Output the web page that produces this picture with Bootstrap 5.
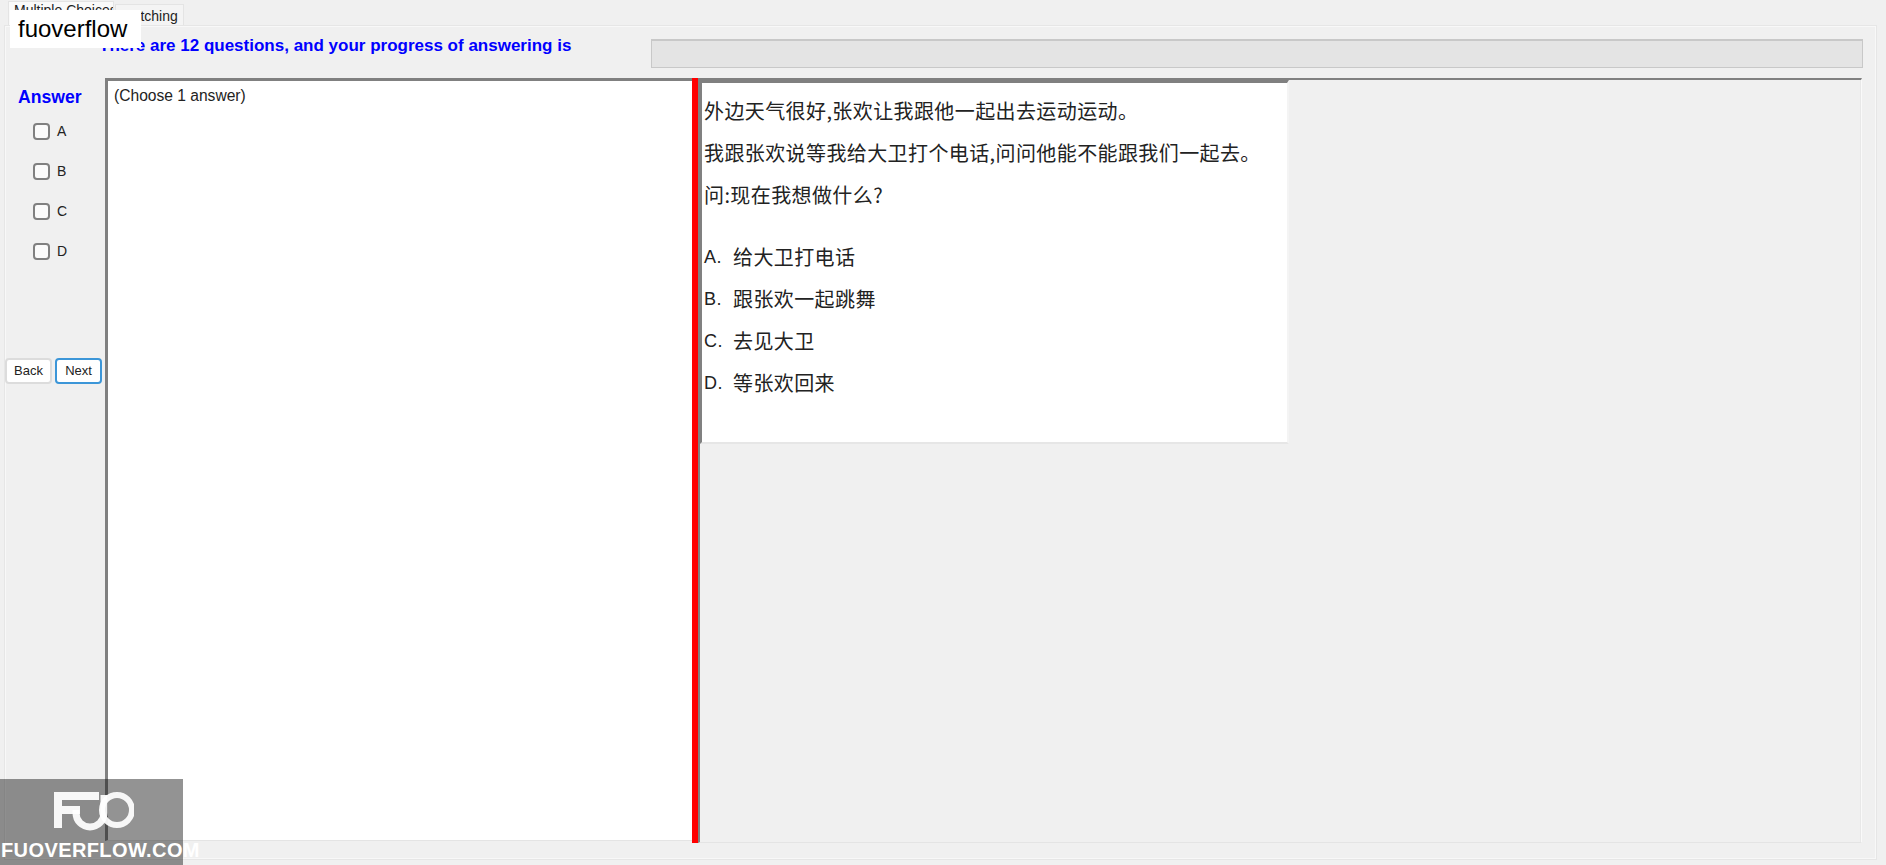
<!DOCTYPE html>
<html lang="zh">
<head>
<meta charset="utf-8">
<title>Exam</title>
<link href="https://cdn.jsdelivr.net/npm/bootstrap@5.3.0/dist/css/bootstrap.min.css" rel="stylesheet">
<style>
html,body{height:865px;overflow:hidden}
body{background:#f0f0f0;font-family:"Liberation Sans",Arial,sans-serif;color:#222;position:relative}
.exam-tabs{padding-left:8px;height:25px;border-bottom:0;align-items:flex-end;gap:1px}
.exam-tabs .nav-link{font-size:14px;line-height:16px;padding:3px 5px;height:21px;border:1px solid #e4e4e4;border-bottom:0;border-radius:0;color:#222;background:#f4f4f4;margin:0}
.exam-tabs .nav-link.active{height:24px;padding:0 5px;background:#fafafa;color:#222;border-color:#e4e4e4;width:106px;white-space:nowrap;overflow:hidden}
.exam-panel{margin-left:4px;width:1873px;height:835px;border:1px solid #e6e6e6;box-shadow:inset 0 0 0 1px #f8f8f8}
.exam-head{height:52px;padding-left:94px;padding-right:13px}
.exam-title{color:#00f;font-weight:700;font-size:17px;line-height:22px;margin:9px 0 0;white-space:nowrap}
.exam-progress{height:29px;width:1212px;margin-top:13px;margin-left:auto;border-radius:0;background:#e4e4e4;border:1px solid #c8c8c8;border-width:2px 1px 1px 1px}
.exam-body{height:765px}
.answer-col{width:100px;flex:none}
.answer-title{color:#00f;font-weight:700;font-size:17.6px;line-height:22px;padding:8px 0 3px 13px}
.answer-row{height:40px;padding-left:28px;font-size:14px;gap:7px}
.answer-row .form-check-input{width:17px;height:17px;margin:0;border:2px solid #808080;border-radius:4px;background-color:#fbfbfb}
.answer-nav{margin-top:87px;gap:3px}
.answer-nav .btn{width:47px;height:26px;padding:0;font-size:13px;line-height:22px;border-radius:4px;background:#fff;color:#222;border:2px solid #dcdcdc}
.answer-nav .btn.next{border-color:#3c96d8}
.stem-pane{width:587px;height:763px;flex:none;background:#fff;border-left:3px solid #808080;border-top:3px solid #808080;border-bottom:1px solid #e4e4e4;padding:5px 0 0 6px;font-size:15.6px;line-height:20px}
.splitter{width:6px;height:765px;flex:none;background:#f00}
.image-pane{flex:1 1 auto;width:0;height:765px;margin-right:14px;border-left:2px solid #808080;border-top:2px solid #808080;border-right:1px solid #fafafa;border-bottom:1px solid #e4e4e4;box-shadow:inset -1px 0 0 #e8e8e8}
.question{width:589px;height:364px;background:#fff;border-left:2px solid #808080;border-top:3px solid #808080;border-right:2px solid #f4f4f4;border-bottom:2px solid #e6e6e6;padding:7px 0 0 2px;font-family:"Noto Sans CJK SC",sans-serif;font-size:20px;letter-spacing:.4px;line-height:42px;color:#222}
.question p{margin:0}
.question ul{margin:20px 0 0}
.question li{display:flex}
.question .key{width:29px;flex:none;font-family:"Liberation Sans",sans-serif;font-size:18px}
.brand{position:absolute;left:10px;top:10px;width:131px;height:38px;padding-left:8px;background:#fff;color:#000;font-size:24px;line-height:38px}
.watermark{position:absolute;left:0;top:779px;width:183px;height:86px;background:rgba(20,20,20,.46);color:#fff;text-align:center}
.watermark svg{position:absolute;left:54px;top:12px}
.watermark span{position:absolute;left:0;right:0;top:59px;font-family:"Liberation Sans Narrow","Liberation Sans",sans-serif;font-weight:700;font-size:20px;line-height:24px;letter-spacing:.4px;padding-left:1px;white-space:nowrap}
</style>
</head>
<body>
<ul class="nav nav-tabs exam-tabs">
  <li class="nav-item"><a class="nav-link active" href="#">Multiple Choices</a></li>
  <li class="nav-item"><a class="nav-link" href="#">Matching</a></li>
</ul>
<main class="exam-panel">
  <div class="exam-head d-flex">
    <p class="exam-title">There are 12 questions, and your progress of answering is</p>
    <div class="progress exam-progress"><div class="progress-bar" style="width:0%"></div></div>
  </div>
  <div class="exam-body d-flex">
    <aside class="answer-col">
      <div class="answer-title">Answer</div>
      <label class="answer-row d-flex align-items-center"><input class="form-check-input" type="checkbox">A</label>
      <label class="answer-row d-flex align-items-center"><input class="form-check-input" type="checkbox">B</label>
      <label class="answer-row d-flex align-items-center"><input class="form-check-input" type="checkbox">C</label>
      <label class="answer-row d-flex align-items-center"><input class="form-check-input" type="checkbox">D</label>
      <div class="answer-nav d-flex">
        <button class="btn" type="button">Back</button>
        <button class="btn next" type="button">Next</button>
      </div>
    </aside>
    <section class="stem-pane">(Choose 1 answer)</section>
    <div class="splitter"></div>
    <section class="image-pane">
      <div class="question">
        <p>外边天气很好,张欢让我跟他一起出去运动运动。</p>
        <p>我跟张欢说等我给大卫打个电话,问问他能不能跟我们一起去。</p>
        <p>问:现在我想做什么?</p>
        <ul class="list-unstyled">
          <li><span class="key">A.</span><span>给大卫打电话</span></li>
          <li><span class="key">B.</span><span>跟张欢一起跳舞</span></li>
          <li><span class="key">C.</span><span>去见大卫</span></li>
          <li><span class="key">D.</span><span>等张欢回来</span></li>
        </ul>
      </div>
    </section>
  </div>
</main>
<div class="brand">fuoverflow</div>
<div class="watermark">
  <svg width="80" height="40" viewBox="0 0 80 40" aria-hidden="true">
    <g fill="none" stroke="#fff" stroke-opacity=".93">
      <path d="M4 37V5H45M4 19H26" stroke-width="8"/>
      <path d="M22 19V22A14 14 0 0 0 50 22V4" stroke-width="7"/>
      <circle cx="63" cy="19" r="15" stroke-width="6"/>
    </g>
  </svg>
  <span>FUOVERFLOW.COM</span>
</div>
</body>
</html>
